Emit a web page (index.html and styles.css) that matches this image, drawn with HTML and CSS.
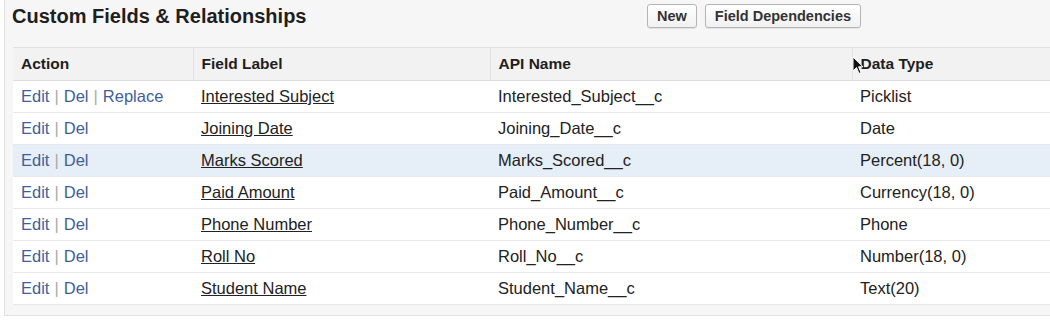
FILE: index.html
```html
<!DOCTYPE html>
<html>
<head>
<meta charset="utf-8">
<link rel="stylesheet" href="styles.css">
</head>
<body>
<div class="panel">
  <div class="panel-head">
    <h2 class="title">Custom Fields &amp; Relationships</h2>
    <div class="buttons">
      <button class="btn">New</button>
      <button class="btn">Field Dependencies</button>
    </div>
  </div>
  <table class="list">
    <colgroup>
      <col class="c1"><col class="c2"><col class="c3"><col class="c4">
    </colgroup>
    <thead>
      <tr>
        <th>Action</th>
        <th>Field Label</th>
        <th>API Name</th>
        <th class="dt">Data Type<svg class="cursor" width="12" height="19" viewBox="0 0 12 19"><path d="M1 1 L1 15 L4.5 11.5 L7 17.5 L9 16.6 L6.6 10.8 L11 10.8 Z" fill="#111" stroke="#fff" stroke-width="1"/></svg></th>
      </tr>
    </thead>
    <tbody>
      <tr>
        <td><a class="act">Edit</a><span class="sep">|</span><a class="act">Del</a><span class="sep">|</span><a class="act">Replace</a></td>
        <td><a class="lbl">Interested Subject</a></td>
        <td>Interested_Subject__c</td>
        <td>Picklist</td>
      </tr>
      <tr>
        <td><a class="act">Edit</a><span class="sep">|</span><a class="act">Del</a></td>
        <td><a class="lbl">Joining Date</a></td>
        <td>Joining_Date__c</td>
        <td>Date</td>
      </tr>
      <tr class="hl">
        <td><a class="act">Edit</a><span class="sep">|</span><a class="act">Del</a></td>
        <td><a class="lbl">Marks Scored</a></td>
        <td>Marks_Scored__c</td>
        <td>Percent(18, 0)</td>
      </tr>
      <tr>
        <td><a class="act">Edit</a><span class="sep">|</span><a class="act">Del</a></td>
        <td><a class="lbl">Paid Amount</a></td>
        <td>Paid_Amount__c</td>
        <td>Currency(18, 0)</td>
      </tr>
      <tr>
        <td><a class="act">Edit</a><span class="sep">|</span><a class="act">Del</a></td>
        <td><a class="lbl">Phone Number</a></td>
        <td>Phone_Number__c</td>
        <td>Phone</td>
      </tr>
      <tr>
        <td><a class="act">Edit</a><span class="sep">|</span><a class="act">Del</a></td>
        <td><a class="lbl">Roll No</a></td>
        <td>Roll_No__c</td>
        <td>Number(18, 0)</td>
      </tr>
      <tr>
        <td><a class="act">Edit</a><span class="sep">|</span><a class="act">Del</a></td>
        <td><a class="lbl">Student Name</a></td>
        <td>Student_Name__c</td>
        <td>Text(20)</td>
      </tr>
    </tbody>
  </table>
</div>
</body>
</html>
```

FILE: styles.css
```css
html, body {
  margin: 0;
  padding: 0;
  background: #ffffff;
  overflow: hidden;
}
body {
  font-family: "Liberation Sans", Arial, sans-serif;
  color: #222;
}
.panel {
  margin-left: 4px;
  background: #f6f6f6;
  border-left: 1px solid #e2e2e2;
  border-bottom: 1px solid #e2e2e2;
  padding-bottom: 10px;
}
.panel-head {
  display: flex;
  align-items: center;
  height: 24px;
  padding: 4px 0 19px 7px;
}
.title {
  margin: 0;
  flex: 0 0 635px;
  font-size: 20px;
  font-weight: bold;
  color: #1e1e1e;
  line-height: 24px;
}
.buttons {
  display: flex;
  gap: 8px;
}
.btn {
  font-family: "Liberation Sans", Arial, sans-serif;
  font-size: 14.5px;
  font-weight: bold;
  color: #333;
  height: 24px;
  padding: 0 9px;
  border: 1px solid #b5b5b5;
  border-radius: 3px;
  background: linear-gradient(#ffffff, #f1f1f1);
  box-shadow: 0 1px 1px rgba(0,0,0,0.08);
}
.list {
  margin-left: 8px;
  width: calc(100% - 8px);
  border-collapse: collapse;
  background: #ffffff;
  table-layout: fixed;
}
.c1 { width: 180px; }
.c2 { width: 297px; }
.c3 { width: 362px; }
.list th {
  height: 32px;
  padding: 0 0 0 8px;
  text-align: left;
  font-size: 15.5px;
  font-weight: bold;
  color: #1e1e1e;
  background: #f2f2f2;
  border-top: 1px solid #e0e0e0;
  border-bottom: 1px solid #dcdcdc;
}
.list th + th {
  border-left: 1px solid #e2e2e2;
}
.dt {
  position: relative;
}
.cursor {
  position: absolute;
  left: -1px;
  top: 8px;
}
.list td {
  height: 31px;
  padding: 0 0 0 8px;
  font-size: 16.5px;
  color: #222;
  border-bottom: 1px solid #e8e8e8;
  white-space: nowrap;
}
.list tr.hl td {
  background: #e6eef7;
}
.act {
  color: #3f5f97;
}
.sep {
  color: #aaa;
  padding: 0 5px;
}
.lbl {
  color: #222;
  text-decoration: underline;
}
```
